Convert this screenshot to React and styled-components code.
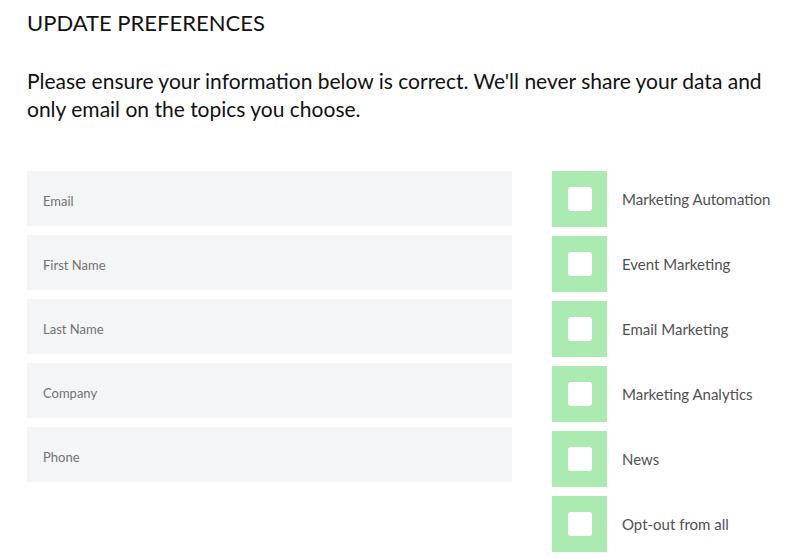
import React from 'react';
import styled, { createGlobalStyle } from 'styled-components';

const GlobalStyle = createGlobalStyle`
  body {
    margin: 0;
    background: #ffffff;
    font-family: Lato, 'Noto Sans', sans-serif;
    color: #111111;
  }
`;

const fields = ['Email', 'First Name', 'Last Name', 'Company', 'Phone'];

const topics = [
  'Marketing Automation',
  'Event Marketing',
  'Email Marketing',
  'Marketing Analytics',
  'News',
  'Opt-out from all',
];

const App = () => (
  <>
    <GlobalStyle />
    <StyledPage>
      <Heading>UPDATE PREFERENCES</Heading>
      <Intro>
        Please ensure your information below is correct. We'll never share your data and only email on
        the topics you choose.
      </Intro>
      <FormGrid>
        <FieldList>
          {fields.map((field) => (
            <Field key={field} placeholder={field} />
          ))}
        </FieldList>
        <TopicList>
          {topics.map((topic) => (
            <Topic key={topic}>
              <CheckTile>
                <CheckBox />
              </CheckTile>
              <TopicLabel>{topic}</TopicLabel>
            </Topic>
          ))}
        </TopicList>
      </FormGrid>
    </StyledPage>
  </>
);

const StyledPage = styled.div`
  padding: 8px 0 0 27px;
`;

const Heading = styled.h1`
  margin: 0;
  font-size: 22px;
  font-weight: 400;
  line-height: 29px;
  color: #111111;
`;

const Intro = styled.p`
  margin: 30px 0 0;
  width: 750px;
  font-size: 21px;
  line-height: 28px;
  color: #111111;
`;

const FormGrid = styled.div`
  display: flex;
  gap: 40px;
  margin-top: 48px;
`;

const FieldList = styled.div`
  display: flex;
  flex-direction: column;
  gap: 9px;
  width: 485px;
`;

const Field = styled.input`
  box-sizing: border-box;
  height: 55px;
  padding: 4px 16px 0;
  border: none;
  background: #f4f5f6;
  font-family: Lato, 'Noto Sans', sans-serif;
  font-size: 13px;
  outline: none;

  &::placeholder {
    color: #727274;
  }
`;

const TopicList = styled.div`
  display: flex;
  flex-direction: column;
  gap: 9px;
`;

const Topic = styled.label`
  display: flex;
  align-items: center;
  gap: 15px;
`;

const CheckTile = styled.span`
  display: flex;
  align-items: center;
  justify-content: center;
  width: 55px;
  height: 56px;
  background: #abebb1;
`;

const CheckBox = styled.span`
  width: 24px;
  height: 24px;
  border-radius: 3px;
  background: #ffffff;
`;

const TopicLabel = styled.span`
  font-size: 15px;
  color: #505052;
`;

export default App;
